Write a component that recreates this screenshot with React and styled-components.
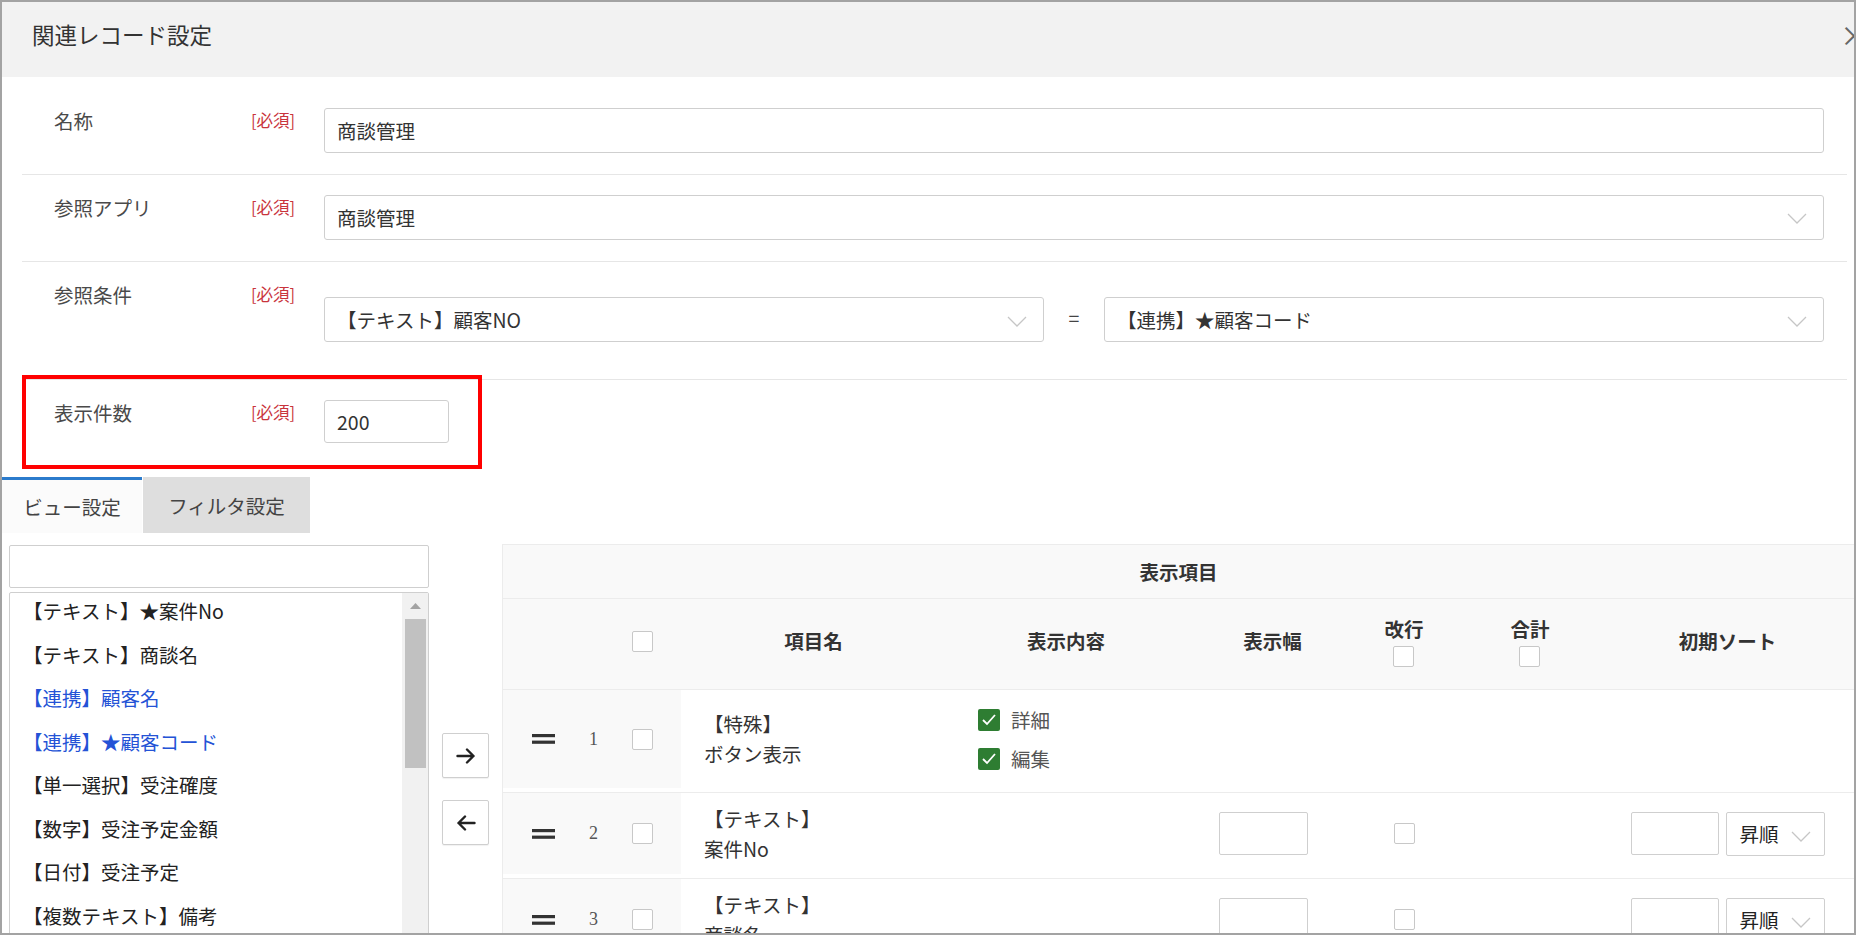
import React from "react";
import styled, { createGlobalStyle } from "styled-components";

const Global = createGlobalStyle`
  html, body { margin: 0; padding: 0; background: #fff; }
  body { font-family: "Noto Sans CJK JP", "Noto Sans", sans-serif; color: #333; }
  * { box-sizing: border-box; }
`;

const Frame = styled.div`
  width: 1856px;
  height: 935px;
  border: 2px solid #a3a3a3;
  overflow: hidden;
  background: #fff;
  display: flex;
  flex-direction: column;
`;

const Header = styled.header`
  position: relative;
  flex: none;
  height: 75px;
  background: #f2f2f2;
  padding: 17px 0 0 30px;
  font-size: 22.5px;
  line-height: 30px;
  color: #333;
`;

const Close = styled.span`
  position: absolute;
  right: -14px;
  top: 18px;
  font-size: 28px;
  line-height: 30px;
  color: #666;
`;

const Form = styled.div`
  flex: none;
  padding: 11px 7px 0 20px;
`;

const Row = styled.div`
  position: relative;
  display: flex;
  align-items: flex-start;
  padding: 20px 0 ${(p) => (p.$last ? 34 : 21)}px 0;
  border-bottom: ${(p) => (p.$last ? "none" : "1px solid #e6e6e6")};
`;

const Label = styled.div`
  flex: none;
  width: 229px;
  padding-left: 32px;
  margin-top: -2px;
  line-height: 29px;
  font-size: 19.5px;
  color: #4a4a4a;
`;

const Required = styled.div`
  flex: none;
  width: 73px;
  margin-top: -2px;
  line-height: 29px;
  font-size: 16.5px;
  color: #c9343c;
`;

const Field = styled.div`
  flex: 1;
  display: flex;
  align-items: center;
  margin: ${(p) => p.$mt || 0}px 23px ${(p) => p.$mb || 0}px 0;
`;

const TextBox = styled.div`
  flex: ${(p) => (p.$w ? "none" : "1")};
  width: ${(p) => (p.$w ? `${p.$w}px` : "auto")};
  height: ${(p) => p.$h || 45}px;
  display: flex;
  align-items: center;
  justify-content: space-between;
  padding: 0 16px 0 12px;
  border: 1px solid #cfcfcf;
  border-radius: 3px;
  background: #fff;
  font-size: 19.5px;
  color: #333;
  white-space: nowrap;
`;

const Eq = styled.div`
  flex: none;
  width: 60px;
  text-align: center;
  font-size: 19.5px;
  color: #444;
  margin-top: -4px;
`;

const Highlight = styled.div`
  position: absolute;
  left: 0;
  top: -5px;
  width: 460px;
  height: 94px;
  border: 4px solid #ff0000;
  pointer-events: none;
`;

const TabBar = styled.div`
  flex: none;
  display: flex;
  gap: 1px;
  height: 56px;
`;

const Tab = styled.div`
  width: ${(p) => p.$w}px;
  display: flex;
  align-items: center;
  justify-content: center;
  font-size: 19.5px;
  color: #444;
  background: ${(p) => (p.$active ? "#fbfbfb" : "#dedede")};
  border-top: ${(p) => (p.$active ? "3px solid #2b7bcc" : "none")};
`;

const Main = styled.div`
  flex: 1;
  min-height: 0;
  display: flex;
  align-items: flex-start;
  padding: 11px 0 0 7px;
`;

const LeftPanel = styled.div`
  flex: none;
  width: 420px;
  margin-top: 1px;
  display: flex;
  flex-direction: column;
  gap: 4px;
`;

const Search = styled.div`
  height: 43px;
  border: 1px solid #cfcfcf;
  border-radius: 2px;
  background: #fff;
`;

const ListBox = styled.div`
  height: 400px;
  display: flex;
  border: 1px solid #cfcfcf;
  border-radius: 2px;
  background: #fff;
`;

const Items = styled.ul`
  flex: 1;
  list-style: none;
  margin: -4px 0 0 0;
  padding: 0 0 0 13px;
`;

const Item = styled.li`
  height: 43.5px;
  line-height: 43.5px;
  font-size: 19.5px;
  white-space: nowrap;
  color: ${(p) => (p.$link ? "#2453d6" : "#222")};
`;

const ScrollTrack = styled.div`
  flex: none;
  width: 26px;
  background: #f1f1f1;
  display: flex;
  flex-direction: column;
`;

const ScrollUp = styled.div`
  height: 26px;
  display: flex;
  align-items: center;
  justify-content: center;
`;

const Thumb = styled.div`
  height: 149px;
  margin: 0 2px 0 3px;
  background: #c1c1c1;
`;

const ArrowCol = styled.div`
  flex: none;
  width: 73px;
  display: flex;
  flex-direction: column;
  align-items: center;
  gap: 22px;
  padding-top: 189px;
`;

const ArrowBtn = styled.button`
  width: 47px;
  height: 45px;
  padding: 0;
  display: flex;
  align-items: center;
  justify-content: center;
  border: 1px solid #cfcfcf;
  border-radius: 2px;
  background: #fff;
  box-shadow: 0 1px 1px rgba(0, 0, 0, 0.06);
`;

const Table = styled.div`
  flex: 1;
  display: flex;
  flex-direction: column;
  border-top: 1px solid #ececec;
  border-left: 1px solid #ececec;
`;

const TRow = styled.div`
  flex: none;
  display: grid;
  grid-template-columns: 76px 40px 62px 265px 240px 155px 126px 126px 1fr;
  height: ${(p) => p.$h}px;
  border-bottom: 1px solid #ececec;
  background: ${(p) => (p.$head ? "#f9f9f9" : "#fff")};
  padding-bottom: ${(p) => p.$pb || 0}px;
`;

const Cell = styled.div`
  display: flex;
  align-items: center;
  justify-content: ${(p) => p.$justify || "flex-start"};
  padding-left: ${(p) => p.$pl || 0}px;
  background: ${(p) => (p.$shade ? "#f9f9f9" : "transparent")};
  grid-column: ${(p) => p.$span || "auto"};
  font-size: 19.5px;
  color: #333;
`;

const HeadText = styled.span`
  font-weight: 700;
  font-size: 19.5px;
  color: #333;
  line-height: 26px;
`;

const HeadStack = styled.div`
  display: flex;
  flex-direction: column;
  align-items: center;
  gap: 4px;
`;

const Check = styled.span`
  display: inline-block;
  flex: none;
  width: 21px;
  height: 21px;
  border: 1px solid #c8c8c8;
  border-radius: 2px;
  background: #fff;
`;

const GreenCheck = styled.span`
  display: inline-flex;
  align-items: center;
  justify-content: center;
  flex: none;
  width: 22px;
  height: 22px;
  border-radius: 2px;
  background: #2e7d32;
`;

const Num = styled.span`
  font-family: "Liberation Serif", serif;
  font-size: 18px;
  color: #555;
`;

const ItemName = styled.div`
  line-height: 30px;
  font-size: 19.5px;
  color: #333;
`;

const OptionList = styled.div`
  display: flex;
  flex-direction: column;
  gap: 17px;
`;

const Option = styled.label`
  display: flex;
  align-items: center;
  gap: 11px;
  font-size: 19.5px;
  line-height: 22px;
  color: #555;
`;

const SmallInput = styled.div`
  flex: none;
  width: ${(p) => p.$w}px;
  height: 43px;
  border: 1px solid #cfcfcf;
  border-radius: 2px;
  background: #fff;
`;

const SortGroup = styled.div`
  display: flex;
  align-items: center;
  gap: 7px;
`;

const SortSelect = styled.div`
  flex: none;
  width: 99px;
  height: 44px;
  display: flex;
  align-items: center;
  gap: 12px;
  padding-left: 13px;
  border: 1px solid #cfcfcf;
  border-radius: 2px;
  background: #fff;
  font-size: 19.5px;
  color: #222;
`;

const ChevronWrap = styled.span`
  display: inline-flex;
  margin-top: ${(p) => p.$mt || 0}px;
`;

const Chevron = ({ mt }) => (
  <ChevronWrap $mt={mt}>
    <svg width="20" height="11" viewBox="0 0 20 11">
      <polyline points="1,1 10,10 19,1" fill="none" stroke="#c6c6c6" strokeWidth="1.3" />
    </svg>
  </ChevronWrap>
);

const Handle = () => (
  <svg width="23" height="10" viewBox="0 0 23 10">
    <rect x="0" y="0" width="23" height="3.2" fill="#333" />
    <rect x="0" y="6.6" width="23" height="3.2" fill="#333" />
  </svg>
);

const Tick = () => (
  <svg width="16" height="13" viewBox="0 0 16 13">
    <polyline points="2,7 6,11 14,2" fill="none" stroke="#fff" strokeWidth="1.8" />
  </svg>
);

const Arrow = ({ left }) => (
  <svg width="20" height="16" viewBox="0 0 20 16" style={left ? { transform: "scaleX(-1)" } : undefined}>
    <path d="M1.5 8 H17.5 M11 1.5 L17.5 8 L11 14.5" fill="none" stroke="#222" strokeWidth="2.4" strokeLinecap="round" strokeLinejoin="round" />
  </svg>
);

const listItems = [
  { t: "【テキスト】★案件No" },
  { t: "【テキスト】商談名" },
  { t: "【連携】顧客名", link: true },
  { t: "【連携】★顧客コード", link: true },
  { t: "【単一選択】受注確度" },
  { t: "【数字】受注予定金額" },
  { t: "【日付】受注予定" },
  { t: "【複数テキスト】備考" },
];

const rows = [
  { n: 1, l1: "【特殊】", l2: "ボタン表示", special: true, h: 103 },
  { n: 2, l1: "【テキスト】", l2: "案件No", h: 86 },
  { n: 3, l1: "【テキスト】", l2: "商談名", h: 86 },
];

export default function App() {
  return (
    <>
      <Global />
      <Frame>
        <Header>
          関連レコード設定
          <Close>×</Close>
        </Header>
        <Form>
          <Row>
            <Label>名称</Label>
            <Required>[必須]</Required>
            <Field>
              <TextBox>商談管理</TextBox>
            </Field>
          </Row>
          <Row>
            <Label>参照アプリ</Label>
            <Required>[必須]</Required>
            <Field>
              <TextBox>
                商談管理
                <Chevron mt={2} />
              </TextBox>
            </Field>
          </Row>
          <Row>
            <Label>参照条件</Label>
            <Required>[必須]</Required>
            <Field $mt={15} $mb={16}>
              <TextBox>
                【テキスト】顧客NO
                <Chevron mt={4} />
              </TextBox>
              <Eq>=</Eq>
              <TextBox>
                【連携】★顧客コード
                <Chevron mt={4} />
              </TextBox>
            </Field>
          </Row>
          <Row $last>
            <Label>表示件数</Label>
            <Required>[必須]</Required>
            <Field>
              <TextBox $w={125} $h={43}>200</TextBox>
            </Field>
            <Highlight />
          </Row>
        </Form>
        <TabBar>
          <Tab $w={140} $active>ビュー設定</Tab>
          <Tab $w={167}>フィルタ設定</Tab>
        </TabBar>
        <Main>
          <LeftPanel>
            <Search />
            <ListBox>
              <Items>
                {listItems.map((it) => (
                  <Item key={it.t} $link={it.link}>{it.t}</Item>
                ))}
              </Items>
              <ScrollTrack>
                <ScrollUp>
                  <svg width="11" height="6" viewBox="0 0 11 6">
                    <polygon points="0,6 5.5,0 11,6" fill="#a3a3a3" />
                  </svg>
                </ScrollUp>
                <Thumb />
              </ScrollTrack>
            </ListBox>
          </LeftPanel>
          <ArrowCol>
            <ArrowBtn aria-label="追加"><Arrow /></ArrowBtn>
            <ArrowBtn aria-label="削除"><Arrow left /></ArrowBtn>
          </ArrowCol>
          <Table>
            <TRow $head $h={54}>
              <Cell $span="1 / -1" $justify="center">
                <HeadText>表示項目</HeadText>
              </Cell>
            </TRow>
            <TRow $head $h={91} $pb={6}>
              <Cell />
              <Cell />
              <Cell $pl={13}><Check /></Cell>
              <Cell $justify="center"><HeadText>項目名</HeadText></Cell>
              <Cell $justify="center"><HeadText>表示内容</HeadText></Cell>
              <Cell $justify="center" $pl={18}><HeadText>表示幅</HeadText></Cell>
              <Cell $justify="center">
                <HeadStack><HeadText>改行</HeadText><Check /></HeadStack>
              </Cell>
              <Cell $justify="center">
                <HeadStack><HeadText>合計</HeadText><Check /></HeadStack>
              </Cell>
              <Cell $justify="center" $pl={8}><HeadText>初期ソート</HeadText></Cell>
            </TRow>
            {rows.map((r) => (
              <TRow key={r.n} $h={r.h} $pb={4}>
                <Cell $shade $pl={29}><Handle /></Cell>
                <Cell $shade $pl={10}><Num>{r.n}</Num></Cell>
                <Cell $shade $pl={13}><Check /></Cell>
                <Cell $pl={23}>
                  <ItemName>
                    <div>{r.l1}</div>
                    <div>{r.l2}</div>
                  </ItemName>
                </Cell>
                <Cell $pl={32}>
                  {r.special && (
                    <OptionList>
                      <Option><GreenCheck><Tick /></GreenCheck>詳細</Option>
                      <Option><GreenCheck><Tick /></GreenCheck>編集</Option>
                    </OptionList>
                  )}
                </Cell>
                <Cell $justify="center">{!r.special && <SmallInput $w={89} />}</Cell>
                <Cell $justify="center">{!r.special && <Check />}</Cell>
                <Cell />
                <Cell $justify="center" $pl={8}>
                  {!r.special && (
                    <SortGroup>
                      <SmallInput $w={88} />
                      <SortSelect>
                        昇順
                        <Chevron mt={6} />
                      </SortSelect>
                    </SortGroup>
                  )}
                </Cell>
              </TRow>
            ))}
          </Table>
        </Main>
      </Frame>
    </>
  );
}
